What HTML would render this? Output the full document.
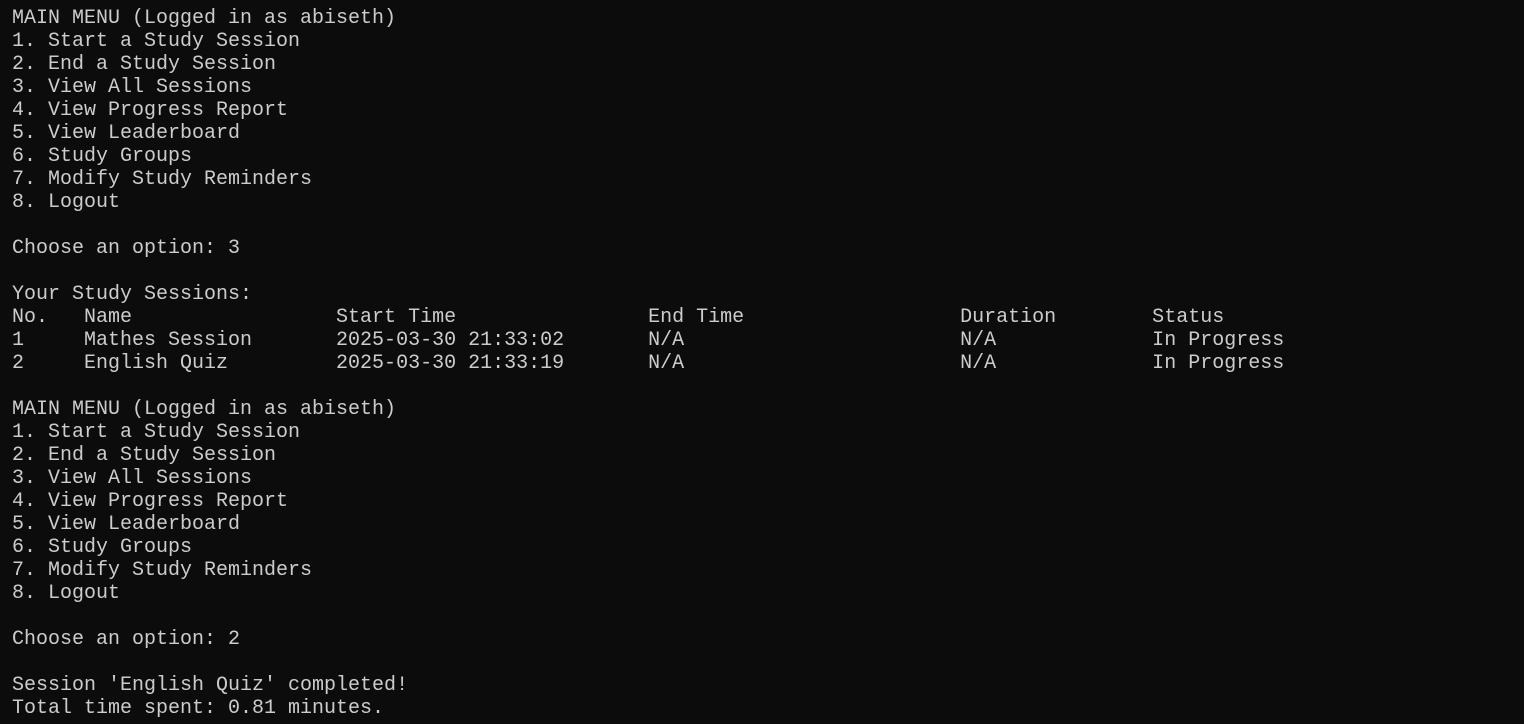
<!DOCTYPE html>
<html><head><meta charset="utf-8"><style>
html,body{margin:0;padding:0;background:#0c0c0c;width:1524px;height:724px;overflow:hidden}
pre{margin:0;position:absolute;left:12px;top:7px;font-family:"Liberation Mono","DejaVu Sans Mono",monospace;font-size:20px;line-height:23px;color:#cccccc}
</style></head><body><pre>MAIN MENU (Logged in as abiseth)
1. Start a Study Session
2. End a Study Session
3. View All Sessions
4. View Progress Report
5. View Leaderboard
6. Study Groups
7. Modify Study Reminders
8. Logout

Choose an option: 3

Your Study Sessions:
No.   Name                 Start Time                End Time                  Duration        Status
1     Mathes Session       2025-03-30 21:33:02       N/A                       N/A             In Progress
2     English Quiz         2025-03-30 21:33:19       N/A                       N/A             In Progress

MAIN MENU (Logged in as abiseth)
1. Start a Study Session
2. End a Study Session
3. View All Sessions
4. View Progress Report
5. View Leaderboard
6. Study Groups
7. Modify Study Reminders
8. Logout

Choose an option: 2

Session 'English Quiz' completed!
Total time spent: 0.81 minutes.</pre></body></html>
